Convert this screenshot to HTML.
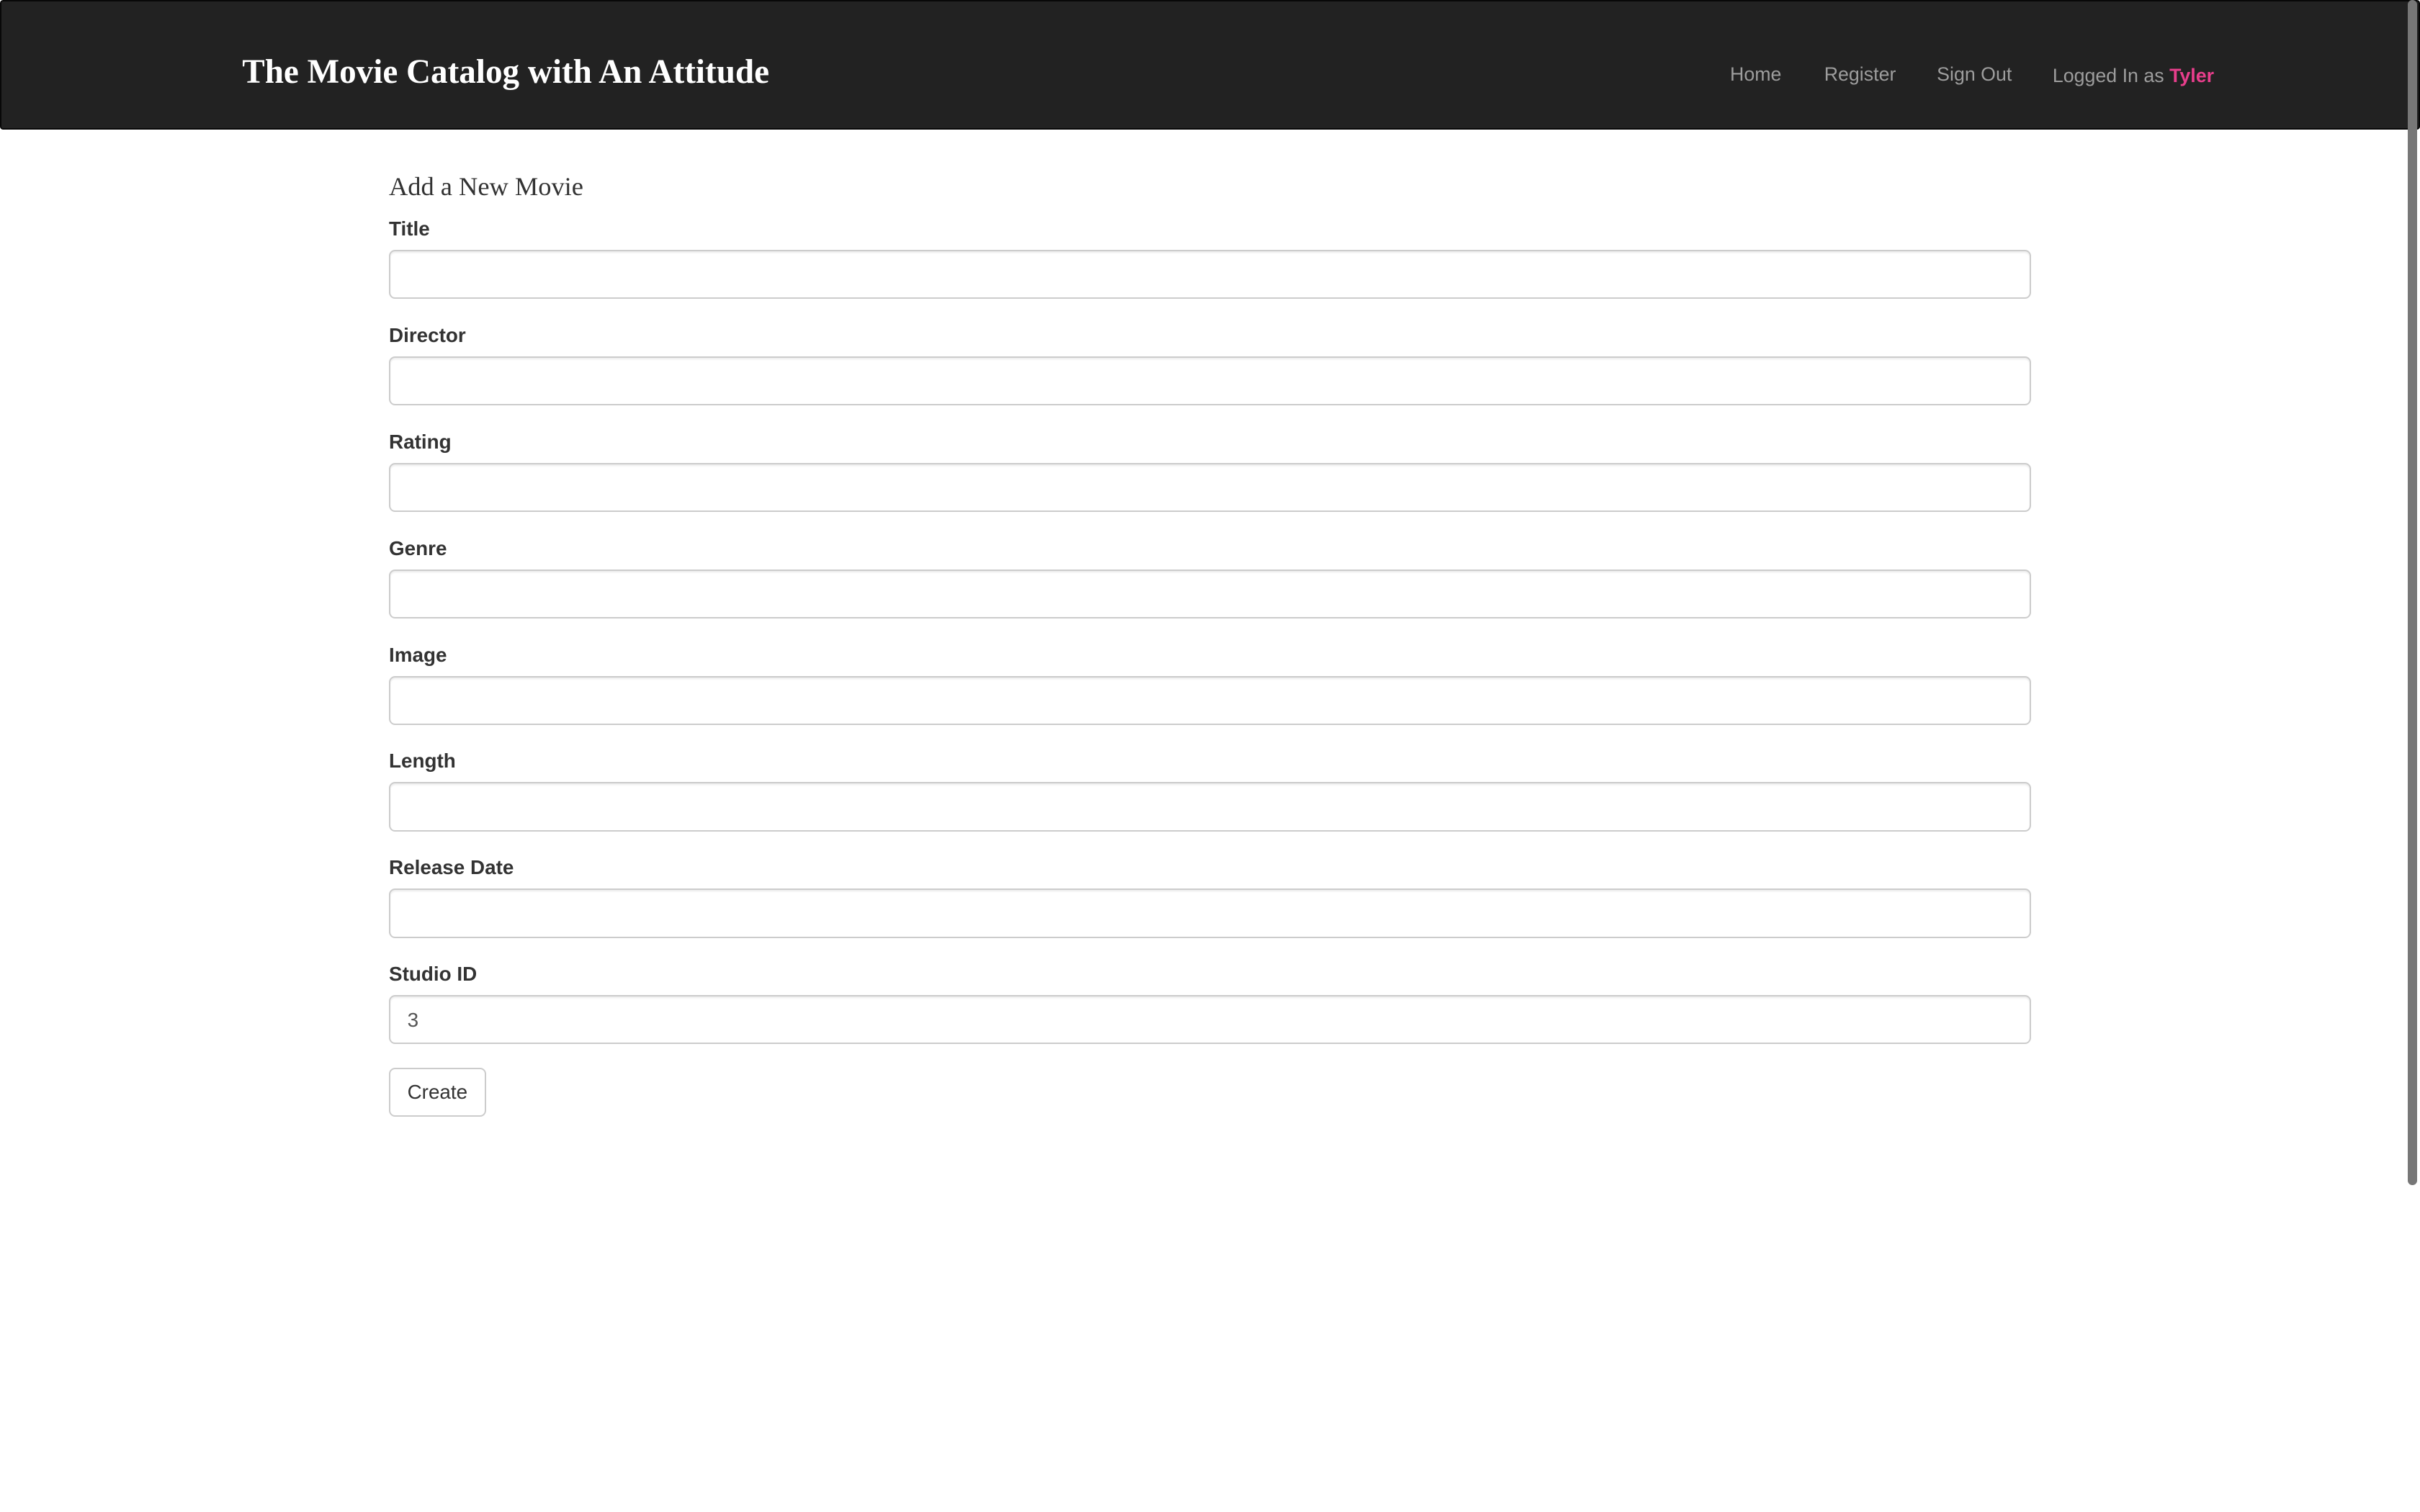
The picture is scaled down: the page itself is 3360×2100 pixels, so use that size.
<!DOCTYPE html>
<html><head><style>
html,body{margin:0;padding:0;background:#fff;overflow:hidden}
body{zoom:2.142857;width:1568px;height:980px;position:relative;font-family:"Liberation Sans",sans-serif}
.nav{position:absolute;left:0;top:0;width:1566px;height:82px;background:#222;border:1px solid #080808;border-radius:2px}
.brand{position:absolute;left:156px;top:33px;font-family:"Liberation Serif",serif;font-weight:bold;font-size:22px;color:#fff;letter-spacing:0}
.nl{position:absolute;top:40px;font-size:12.5px;color:#9d9d9d}
.main{position:absolute;left:252px;top:0;width:1064px}
h3{position:absolute;left:0;top:111px;margin:0;font-family:"Liberation Serif",serif;font-weight:normal;font-size:17px;color:#333}
label{position:absolute;left:0;font-weight:bold;font-size:13px;color:#333}
.in{position:absolute;left:0;width:1062px;height:30px;border:1px solid #ccc;border-radius:4px;box-shadow:inset 0 1px 1px rgba(0,0,0,.075);font-size:13px;color:#555;box-sizing:content-box}
.in span{position:absolute;left:11px;top:8px}
.btn{position:absolute;left:0;top:692px;width:61px;height:30px;border:1px solid #ccc;border-radius:4px;font-size:13px;color:#333;text-align:center;line-height:30px}
.sb{position:absolute;left:1560px;top:0;width:6px;height:768px;background:#777;border-radius:3px}
</style></head><body>
<div class="nav">
<div class="brand">The Movie Catalog with An Attitude</div>
<div class="nl" style="left:1120px">Home</div>
<div class="nl" style="left:1181px">Register</div>
<div class="nl" style="left:1254px">Sign Out</div>
<div class="nl" style="left:1329px;top:41px">Logged In as <b style="color:#e83e8c">Tyler</b></div>
</div>
<div class="main">
<h3>Add a New Movie</h3>
<label style="top:141px">Title</label><div class="in" style="top:162px"></div>
<label style="top:210px">Director</label><div class="in" style="top:231px"></div>
<label style="top:279px">Rating</label><div class="in" style="top:300px"></div>
<label style="top:348px">Genre</label><div class="in" style="top:369px"></div>
<label style="top:417px">Image</label><div class="in" style="top:438px"></div>
<label style="top:486px">Length</label><div class="in" style="top:507px"></div>
<label style="top:555px">Release Date</label><div class="in" style="top:576px"></div>
<label style="top:624px">Studio ID</label><div class="in" style="top:645px"><span>3</span></div>
<div class="btn">Create</div>
</div>
<div class="sb"></div>
</body></html>
